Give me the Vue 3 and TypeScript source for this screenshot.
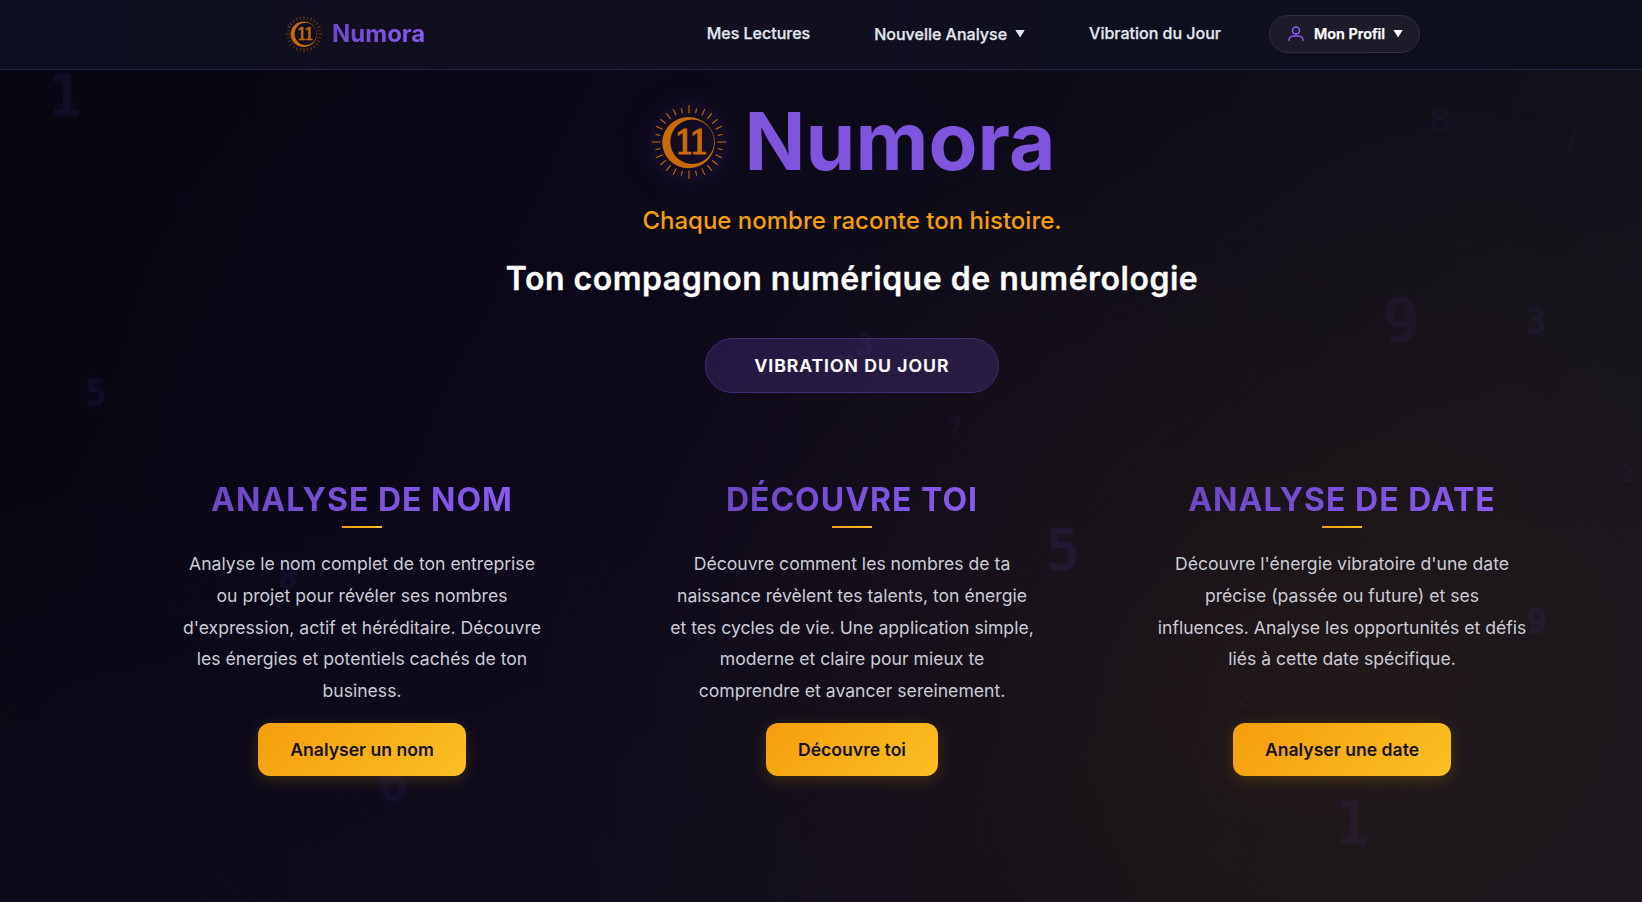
<script setup lang="ts">
interface Digit { char: string; x: number; y: number; size: number; alpha: number }
interface Card { title: string; text: string; action: string }

const digits: Digit[] = [
  { char: '1', x: 64.5, y: 95, size: 56, alpha: 0.1 },
  { char: '5', x: 96, y: 393, size: 34, alpha: 0.1 },
  { char: '3', x: 187, y: 200, size: 18, alpha: 0.03 },
  { char: '8', x: 1440, y: 120, size: 34, alpha: 0.05 },
  { char: '7', x: 1572, y: 137, size: 34, alpha: 0.04 },
  { char: '9', x: 1401, y: 321, size: 58, alpha: 0.09 },
  { char: '3', x: 1536, y: 321, size: 34, alpha: 0.08 },
  { char: '2', x: 1627, y: 474, size: 21, alpha: 0.06 },
  { char: '5', x: 1063, y: 550, size: 56, alpha: 0.13 },
  { char: '9', x: 1537, y: 621, size: 34, alpha: 0.1 },
  { char: '2', x: 1242.5, y: 700, size: 21, alpha: 0.06 },
  { char: '1', x: 1352, y: 823, size: 57, alpha: 0.09 },
  { char: '8', x: 288, y: 577, size: 32, alpha: 0.09 },
  { char: '6', x: 393, y: 783, size: 48, alpha: 0.08 },
  { char: '3', x: 865, y: 345, size: 28, alpha: 0.07 },
  { char: '7', x: 955, y: 427, size: 24, alpha: 0.06 },
  { char: '1', x: 1398, y: 652, size: 20, alpha: 0.04 },
]

const cards: Card[] = [
  {
    title: 'Analyse de nom',
    text: "Analyse le nom complet de ton entreprise\nou projet pour révéler ses nombres\nd'expression, actif et héréditaire. Découvre\nles énergies et potentiels cachés de ton\nbusiness.",
    action: 'Analyser un nom',
  },
  {
    title: 'Découvre toi',
    text: 'Découvre comment les nombres de ta\nnaissance révèlent tes talents, ton énergie\net tes cycles de vie. Une application simple,\nmoderne et claire pour mieux te\ncomprendre et avancer sereinement.',
    action: 'Découvre toi',
  },
  {
    title: 'Analyse de date',
    text: "Découvre l'énergie vibratoire d'une date\nprécise (passée ou future) et ses\ninfluences. Analyse les opportunités et défis\nliés à cette date spécifique.",
    action: 'Analyser une date',
  },
]

const rays = Array.from({ length: 28 }, (_, i) => {
  const angle = (i * 2 * Math.PI) / 28
  const inner = i % 7 === 0 ? 28.5 : 29.5
  const outer = i % 7 === 0 ? 37 : i % 7 === 1 || i % 7 === 6 ? 34.5 : 36.5
  return {
    x1: inner * Math.sin(angle), y1: -inner * Math.cos(angle),
    x2: outer * Math.sin(angle), y2: -outer * Math.cos(angle),
  }
})
</script>

<template>
  <div class="page">
    <div class="digits" aria-hidden="true">
      <span
        v-for="(d, i) in digits"
        :key="i"
        class="digit"
        :style="{ left: d.x + 'px', top: d.y + 'px', fontSize: d.size + 'px', opacity: d.alpha }"
      >{{ d.char }}</span>
    </div>

    <svg class="symbols" aria-hidden="true">
      <symbol id="sun-moon" viewBox="-40 -40 80 80">
        <g stroke="#c96a05" stroke-width="1.1">
          <line v-for="(r, i) in rays" :key="i" :x1="r.x1" :y1="r.y1" :x2="r.x2" :y2="r.y2" />
        </g>
        <path
          fill="#c96a05"
          fill-rule="evenodd"
          d="M-26.8 0.6a26.3 25.6 0 1 0 52.6 0a26.3 25.6 0 1 0 -52.6 0ZM-18.7 -0.2a21.9 22.2 0 1 1 43.8 0a21.9 22.2 0 1 1 -43.8 0Z"
        />
        <text class="eleven" x="-4.2" y="11.6" text-anchor="middle">1</text>
        <text class="eleven" x="10.6" y="11.6" text-anchor="middle">1</text>
      </symbol>
    </svg>

    <header class="navbar">
      <div class="nav-inner">
        <a class="brand">
          <svg class="brand-icon"><use href="#sun-moon" /></svg>
          <span class="brand-name">Numora</span>
        </a>
        <nav class="links">
          <a class="link">Mes Lectures</a>
          <a class="link dropdown">Nouvelle Analyse <span class="caret"></span></a>
          <a class="link">Vibration du Jour</a>
          <button class="profile">
            <svg class="user" viewBox="0 0 16 16" fill="none" stroke="#8b5cf6" stroke-width="1.5" stroke-linecap="round">
              <circle cx="8" cy="4.4" r="3.5" />
              <path d="M1 14.6V14.2C1 11.6 3.2 10 5.6 10H10.4C12.8 10 15 11.6 15 14.2V14.6" />
            </svg>
            Mon Profil <span class="caret"></span>
          </button>
        </nav>
      </div>
    </header>

    <main class="content">
      <section class="hero">
        <div class="hero-brand">
          <svg class="hero-icon"><use href="#sun-moon" /></svg>
          <h1 class="hero-title">Numora</h1>
        </div>
        <p class="tagline">Chaque nombre raconte ton histoire.</p>
        <h2 class="subtitle">Ton compagnon numérique de numérologie</h2>
        <button class="vibration">Vibration du jour</button>
      </section>

      <section class="cards">
        <article v-for="card in cards" :key="card.title" class="card">
          <h3 class="card-title">{{ card.title }}</h3>
          <span class="rule"></span>
          <p class="card-text">{{ card.text }}</p>
          <button class="action">{{ card.action }}</button>
        </article>
      </section>
    </main>
  </div>
</template>

<style>
html, body { margin: 0; background: #0a0812; }
</style>

<style scoped>
.page {
  position: relative;
  width: 100%;
  height: 902px;
  overflow: hidden;
  box-sizing: border-box;
  font-family: Inter, "Liberation Sans", sans-serif;
  color: #fff;
  background:
    radial-gradient(ellipse 820px 620px at 1340px 700px, rgba(245, 120, 11, 0.065), rgba(245, 120, 11, 0.03) 50%, transparent),
    radial-gradient(circle 640px at 560px 440px, rgba(60, 5, 120, 0.05), transparent),
    radial-gradient(ellipse 800px 420px at 200px 902px, rgba(40, 44, 80, 0.1), transparent),
    linear-gradient(115deg, #080612 0%, #090714 28%, #0d0b18 52%, #12111a 78%, #14141e 100%);
}
.digits { position: absolute; inset: 0; }
.digit {
  position: absolute;
  transform: translate(-50%, -50%);
  font-family: "DejaVu Sans Mono", monospace;
  font-weight: 400;
  -webkit-text-stroke: 1.4px #6b46d8;
  line-height: 1;
  color: #6b46d8;
  text-shadow: 0 0 10px rgba(107, 70, 216, 0.8);
}
.symbols { position: absolute; width: 0; height: 0; }
.eleven {
  font-family: "DejaVu Serif", serif;
  font-size: 33px;
  fill: #c96a05;
  stroke: #c96a05;
  stroke-width: 1.2px;
}
.navbar {
  position: relative;
  height: 70px;
  box-sizing: border-box;
  border-bottom: 1px solid #272047;
  background: linear-gradient(90deg, #0c0f1f 0%, #0d0f1f 15%, #110e20 20%, #110e20 52%, #0e0f1f 64%, #0d0f1f 100%);
}
.nav-inner {
  display: flex;
  justify-content: space-between;
  align-items: center;
  height: 67px;
  width: 1136px;
  margin: 0 auto 0 284px;
}
.brand { display: flex; align-items: center; gap: 8px; }
.brand-icon { width: 40px; height: 40px; margin-top: 1px; }
.brand-name {
  font-size: 24px;
  font-weight: 700;
  line-height: 29px;
  background: linear-gradient(135deg, #6b46c1, #8b5cf6);
  -webkit-background-clip: text;
  background-clip: text;
  color: transparent;
}
.links { display: flex; align-items: center; }
.link { font-size: 16px; font-weight: 500; color: #e2e8f0; margin: 0 64px 2px 0; line-height: 20px; -webkit-text-stroke: 0.25px #e2e8f0; }
.link:nth-child(3) { margin-right: 48px; }
.link.dropdown { display: flex; align-items: center; margin-bottom: 0; }
.caret {
  width: 10px;
  height: 8px;
  margin-left: 8px;
  background: currentColor;
  clip-path: polygon(0 0, 100% 0, 50% 100%);
}
.profile {
  display: flex;
  align-items: center;
  box-sizing: border-box;
  width: 151px;
  height: 38px;
  padding: 0 16px 0 18px;
  font: 600 14.4px Inter, sans-serif;
  -webkit-text-stroke: 0.25px #fff;
  color: #fff;
  white-space: nowrap;
  border: 1px solid #302d3e;
  border-radius: 19px;
  background: #1d1a2a;
}
.user { width: 16px; height: 16px; margin-right: 10px; flex: none; }
.content { width: 1422px; margin-left: 141px; position: relative; }
.hero { display: flex; flex-direction: column; align-items: center; }
.hero-brand { display: flex; align-items: center; justify-content: center; gap: 16px; margin-top: 22px; height: 98px; width: 100%; }
.hero-icon {
  width: 80px;
  height: 80px;
  margin-top: 1px;
  border-radius: 50%;
  background: rgba(107, 70, 193, 0.08);
  box-shadow: 0 0 30px 4px rgba(107, 70, 193, 0.09);
}
.hero-title { margin: -2px 0 0; font-size: 80px; line-height: 97px; font-weight: 700; color: #7f55de; }
.tagline { margin: 15px 0 0; font-size: 24px; line-height: 32px; font-weight: 500; color: #f59e0b; }
.subtitle { margin: 22px 0 0; font-size: 32px; line-height: 40px; font-weight: 600; letter-spacing: 0.5px; -webkit-text-stroke: 0.3px #fff; }
.vibration {
  margin-top: 39px;
  width: 294px;
  height: 55px;
  font: 600 17.6px Inter, sans-serif;
  letter-spacing: 1px;
  -webkit-text-stroke: 0.2px #fff;
  text-transform: uppercase;
  color: #fff;
  border: 1px solid #432c78;
  border-radius: 28px;
  background: linear-gradient(135deg, rgba(107, 70, 193, 0.24), rgba(139, 92, 246, 0.18));
}
.cards { display: grid; grid-template-columns: repeat(3, 442px); gap: 48px; margin-top: 84px; }
.card { display: flex; flex-direction: column; align-items: center; height: 299px; }
.card-title {
  margin: 0;
  font-size: 32px;
  line-height: 45px;
  font-weight: 700;
  letter-spacing: 1px;
  text-transform: uppercase;
  background: linear-gradient(135deg, #6b46c1, #8b5cf6);
  -webkit-background-clip: text;
  background-clip: text;
  color: transparent;
}
.rule { width: 40px; height: 2px; margin-top: 4px; background: linear-gradient(90deg, #f59e0b, #fbbf24); }
.card-text { margin: 20.25px 0 0; white-space: pre-line; font-size: 17.6px; line-height: 31.68px; text-align: center; color: #cbccd6; }
.action {
  margin-top: auto;
  height: 53px;
  padding: 0 32px;
  font: 600 17.6px Inter, sans-serif;
  color: #15121f;
  border: 0;
  border-radius: 12px;
  background: linear-gradient(135deg, #f59e0b, #fbbf24);
  box-shadow: 0 4px 15px rgba(245, 158, 11, 0.2);
}
</style>
